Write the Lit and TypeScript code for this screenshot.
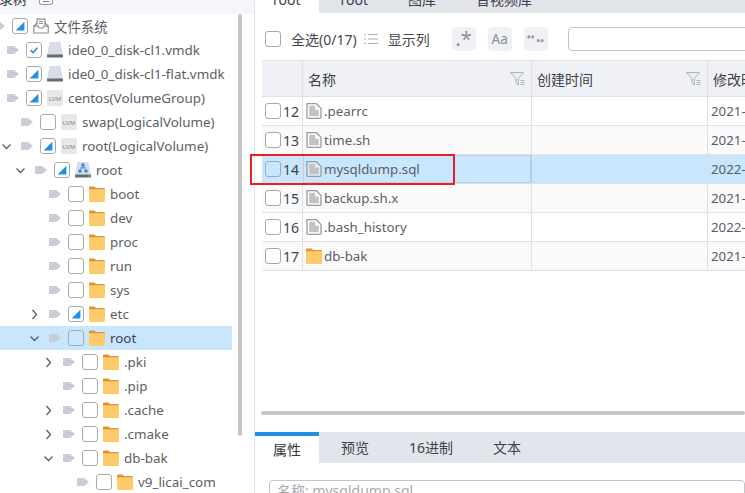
import { LitElement, html, css, svg } from 'lit';
import { customElement } from 'lit/decorators.js';

type Kind = 'fs' | 'disk' | 'lvm' | 'vol' | 'dir';
type Check = 'none' | 'part' | 'full';
interface TreeRow {
  name: string;
  depth: number;
  kind: Kind;
  check: Check;
  chevron?: 'open' | 'closed';
  selected?: boolean;
}

const TREE: TreeRow[] = [
  { name: '文件系统', depth: 0, kind: 'fs', check: 'part' },
  { name: 'ide0_0_disk-cl1.vmdk', depth: 1, kind: 'disk', check: 'full' },
  { name: 'ide0_0_disk-cl1-flat.vmdk', depth: 1, kind: 'disk', check: 'part' },
  { name: 'centos(VolumeGroup)', depth: 1, kind: 'lvm', check: 'part' },
  { name: 'swap(LogicalVolume)', depth: 2, kind: 'lvm', check: 'none' },
  { name: 'root(LogicalVolume)', depth: 2, kind: 'lvm', check: 'part', chevron: 'open' },
  { name: 'root', depth: 3, kind: 'vol', check: 'part', chevron: 'open' },
  { name: 'boot', depth: 4, kind: 'dir', check: 'none' },
  { name: 'dev', depth: 4, kind: 'dir', check: 'none' },
  { name: 'proc', depth: 4, kind: 'dir', check: 'none' },
  { name: 'run', depth: 4, kind: 'dir', check: 'none' },
  { name: 'sys', depth: 4, kind: 'dir', check: 'none' },
  { name: 'etc', depth: 4, kind: 'dir', check: 'part', chevron: 'closed' },
  { name: 'root', depth: 4, kind: 'dir', check: 'none', chevron: 'open', selected: true },
  { name: '.pki', depth: 5, kind: 'dir', check: 'none', chevron: 'closed' },
  { name: '.pip', depth: 5, kind: 'dir', check: 'none' },
  { name: '.cache', depth: 5, kind: 'dir', check: 'none', chevron: 'closed' },
  { name: '.cmake', depth: 5, kind: 'dir', check: 'none', chevron: 'closed' },
  { name: 'db-bak', depth: 5, kind: 'dir', check: 'none', chevron: 'open' },
  { name: 'v9_licai_com', depth: 6, kind: 'dir', check: 'none' },
];

const FILES = [
  { no: 12, name: '.pearrc', date: '2021-', dir: false },
  { no: 13, name: 'time.sh', date: '2021-', dir: false },
  { no: 14, name: 'mysqldump.sql', date: '2022-', dir: false, selected: true },
  { no: 15, name: 'backup.sh.x', date: '2021-', dir: false },
  { no: 16, name: '.bash_history', date: '2022-', dir: false },
  { no: 17, name: 'db-bak', date: '2021-', dir: true },
];

const folderIcon = svg`<svg class="icon" viewBox="0 0 16 16"><path d="M0 1.5q0-1 1-1h4.5l1.5 1.5h8q1 0 1 1V4H0z" fill="#e0933a"/><path d="M0 3.2h16V15q0 1-1 1H1q-1 0-1-1z" fill="#fdcb69"/></svg>`;
const fileIcon = svg`<svg class="icon" viewBox="0 0 16 16"><path d="M1 .7h9.3l4.7 4.7v9.1q0 .8-.8.8H1.8q-.8 0-.8-.8z" fill="#fff" fill-opacity=".35" stroke="#9a9a9a" stroke-width="1.3"/><path d="M3.2 2.8h6v4h3.6v6.4H3.2z" fill="#c2c2c2"/></svg>`;
const diskIcon = svg`<svg class="icon" viewBox="0 0 16 16"><path d="M2.6 0h10.8L16 13H0z" fill="#d8dde8"/><rect y="12.6" width="16" height="3" rx=".6" fill="#666c70"/></svg>`;
const lvmIcon = svg`<svg class="icon" viewBox="0 0 16 16"><rect width="16" height="16" rx="1.5" fill="#e9e8e6"/><text x="8" y="10.6" class="lvm">LVM</text></svg>`;
const volIcon = svg`<svg class="icon" viewBox="0 0 16 16"><path d="M2.6 0h10.8L16 13H0z" fill="#d8dde8"/><rect y="12.6" width="16" height="3" rx=".6" fill="#666c70"/><g fill="#2b83e0"><rect x="6.5" y="1.5" width="3" height="3"/><rect x="3.5" y="7.5" width="3" height="3"/><rect x="9.5" y="7.5" width="3" height="3"/><rect x="7.5" y="4" width="1" height="2"/><rect x="5" y="5.5" width="6" height="1"/></g><rect x="13" y="13.4" width="2" height="1.4" fill="#5fc26b"/></svg>`;
const fsIcon = svg`<svg class="icon" viewBox="0 0 16 16" fill="none" stroke="#8b8f96" stroke-width="1.2"><path d="M4 7V1.2h8V7"/><path d="M6 3.5h4M6 5.5h4"/><path d="M4.2 5 .8 8v7h14.4V8l-3.4-3"/><path d="M.8 8.2h4.4l1 1.8h3.6l1-1.8h4.4"/></svg>`;

const ICONS: Record<Kind, unknown> = { fs: fsIcon, disk: diskIcon, lvm: lvmIcon, vol: volIcon, dir: folderIcon };

function checkbox(state: Check) {
  return html`<span class="check">
    ${state === 'part' ? svg`<svg viewBox="0 0 16 16"><path d="M3 13 13 3v10z" fill="#1e90e6"/></svg>` : ''}
    ${state === 'full' ? svg`<svg viewBox="0 0 16 16"><path d="M4 8.2 7 11l5-5.6" fill="none" stroke="#1e90e6" stroke-width="1.8"/></svg>` : ''}
  </span>`;
}

function chevron(kind?: 'open' | 'closed') {
  if (!kind) return html`<span class="chev"></span>`;
  const d = kind === 'open' ? 'M1.5 3.5 5.5 7.5 9.5 3.5' : 'M3.5 1 7.5 5.5 3.5 10';
  return html`<span class="chev"><svg viewBox="0 0 11 11"><path d=${d} fill="none" stroke="#5b5f66" stroke-width="1.3"/></svg></span>`;
}

const tri = svg`<svg class="tri" viewBox="0 0 12 8"><path d="M0 0h7l5 4-5 4H0z" fill="#c8cdda"/></svg>`;
const filterIcon = svg`<svg class="filter" viewBox="0 0 15 14" fill="none" stroke="#a9aeb8"><path d="M.6.6h13L8.4 6.5v6.6L6 11V6.5z"/><path d="M10.5 8.5h4M10.5 10.5h4M10.5 12.5h4" stroke-width=".9"/></svg>`;
const quoteIcon = svg`<svg class="quote" viewBox="0 0 17 14" fill="#9a9da4"><circle cx="1.8" cy="5" r="1.5"/><circle cx="5.6" cy="5" r="1.5"/><path d="M.4 5 2.4 3h.7L2 5zM4.2 5 6.2 3h.7L5.8 5z"/><circle cx="11.4" cy="8.4" r="1.5"/><circle cx="15.2" cy="8.4" r="1.5"/><path d="M12.9 8.4l-2 2h-.7l1.2-2zM16.7 8.4l-2 2h-.7l1.2-2z"/></svg>`;

@customElement('app-root')
export class AppRoot extends LitElement {
  static styles = css`
    :host {
      display: flex;
      width: 745px;
      height: 493px;
      overflow: hidden;
      background: #fff;
      color: #5b5e66;
      font: 14px 'Noto Sans', 'Noto Sans CJK SC', sans-serif;
    }
    svg { display: block; }
    .left {
      width: 254px;
      flex: none;
      border-right: 1px solid #e3e5ec;
      display: flex;
      flex-direction: column;
      overflow: hidden;
    }
    .left-head {
      height: 14px;
      flex: none;
      background: #f5f6f9;
      display: flex;
      align-items: flex-end;
      gap: 12px;
      padding-bottom: 9px;
      box-sizing: border-box;
      overflow: hidden;
      color: #33363c;
    }
    .left-head .name { margin: 0 0 -3px -15px; white-space: nowrap; line-height: 18px; }
    .left-head .collapse {
      width: 14px;
      height: 14px;
      border: 1px solid #9a9da4;
      border-radius: 2px;
      flex: none;
      box-sizing: border-box;
      display: flex;
      align-items: flex-end;
      justify-content: center;
      padding-bottom: 2px;
    }
    .left-head .collapse i { width: 6px; height: 1px; background: #7f828a; display: block; }
    .tree-wrap { flex: 1; display: flex; min-height: 0; gap: 6px; font-size: 13.4px; }
    .tree { width: 232px; flex: none; }
    .row { height: 24px; overflow: hidden; }
    .row.sel { background: #c9e6ff; }
    .row-in {
      display: flex;
      align-items: center;
      height: 24px;
      white-space: nowrap;
    }
    .row.sel .row-in { color: #3f434a; }
    .chev { width: 11px; height: 11px; flex: none; margin-right: 9px; }
    .tri { width: 12px; height: 8px; flex: none; margin-right: 7px; }
    .check {
      width: 16px;
      height: 16px;
      flex: none;
      box-sizing: border-box;
      border: 1px solid #a8a8a8;
      border-radius: 3px;
      background: #fff;
      display: block;
    }
    .check svg { width: 14px; height: 14px; }
    .sel .check { background: transparent; }
    .icon { width: 16px; height: 16px; flex: none; }
    .lvm { font: 6.2px 'Liberation Sans', sans-serif; fill: #7e8084; text-anchor: middle; }
    .row-in .icon { margin: 0 5px; }
    .vbar { width: 3.5px; height: 422px; border-radius: 2px; background: #c6c6c6; flex: none; }

    .right { flex: 1; min-width: 0; display: flex; flex-direction: column; }
    .tabs {
      display: flex;
      flex: none;
      gap: 4px;
      background: #e2e5ec;
      color: #3e4148;
      overflow: hidden;
    }
    .tab { flex: none; padding: 0 18px; white-space: nowrap; }
    .top-tabs { height: 13px; align-items: flex-start; }
    .top-tabs .tab { line-height: 18px; margin-top: -9px; height: 22px; }
    .top-tabs .tab.on { background: #fff; }
    .tool {
      height: 47px;
      flex: none;
      display: flex;
      align-items: center;
      padding: 5px 0 0 10px;
      box-sizing: border-box;
      white-space: nowrap;
      color: #44474e;
    }
    .tool .all { margin-left: 10px; }
    .list-ic { width: 14px; height: 12px; margin: 0 10px 0 7px; flex: none; }
    .pill {
      width: 24px;
      height: 24px;
      border-radius: 4px;
      background: #f0f1f6;
      flex: none;
      color: #8a8d94;
      display: flex;
      align-items: center;
      justify-content: center;
      margin-right: 12px;
    }
    .pill.first { margin-left: 22px; font-size: 20px; line-height: 1; }
    .pill.aa { font-size: 13.5px; }
    .quote { width: 17px; height: 14px; }
    .search {
      flex: none;
      width: 200px;
      height: 24px;
      margin-left: 8px;
      border: 1px solid #c4c6cc;
      border-radius: 4px;
      box-sizing: border-box;
    }
    .table { flex: none; margin-left: 7px; width: 500px; }
    .tr {
      display: grid;
      grid-template-columns: 41px 229px 176px 1fr;
      height: 29px;
      border-bottom: 1px solid #dfe1ea;
      box-sizing: border-box;
      align-items: stretch;
      background: #fff;
      font-size: 13.3px;
    }
    .tr.odd { background: #fafafa; }
    .tr.sel { background: #c9e6ff; }
    .tr.head {
      height: 37px;
      background: #f0f1f6;
      border-top: 1px solid #dfe1ea;
      color: #3c3f46;
      font-size: 14px;
    }
    .td {
      display: flex;
      align-items: center;
      border-right: 1px solid #dfe1ea;
      padding-left: 3px;
      white-space: nowrap;
      overflow: hidden;
      min-width: 0;
    }
    .td.last { border-right: 0; }
    .td.focus { box-shadow: inset 0 0 0 1px #b9cfe2; border-right-color: #b9cfe2; }
    .head .td { justify-content: space-between; padding: 0 6px 0 5px; }
    .num .n { margin-left: 2px; color: #3f4249; font-size: 14px; }
    .tr .icon { margin-right: 2px; }
    .filter { width: 15px; height: 14px; flex: none; }

    .spacer { flex: none; height: 161px; display: flex; align-items: flex-end; padding-left: 6px; }
    .hbar { width: 100%; height: 4px; border-radius: 2px; background: #c6c6c6; margin-bottom: 17px; }
    .bottom-tabs { height: 31px; }
    .bottom-tabs .tab { line-height: 31px; }
    .bottom-tabs .tab.on {
      background: #fff;
      border-top: 4px solid #1e90e6;
      box-sizing: border-box;
      line-height: 28px;
      color: #33363c;
    }
    .prop {
      margin: 17px 0 0 14px;
      height: 40px;
      flex: none;
      border: 1px solid #c4c6cc;
      border-radius: 4px;
      padding: 1px 0 0 7px;
      color: #a7a9af;
      white-space: nowrap;
      line-height: 18px;
    }
    .mark {
      position: absolute;
      left: 250px;
      top: 154px;
      width: 205px;
      height: 31px;
      box-sizing: border-box;
      border: 2px solid #ee1c25;
    }
  `;

  renderRow(r: TreeRow) {
    const start = r.depth * 14 - 7 - 20;
    return html`<div class="row ${r.selected ? 'sel' : ''}">
      <div class="row-in" style="margin-left:${start}px">
        ${chevron(r.chevron)}${tri}${checkbox(r.check)}${ICONS[r.kind]}<span>${r.name}</span>
      </div>
    </div>`;
  }

  render() {
    return html`
      <div class="left">
        <div class="left-head"><span class="name">目录树</span><span class="collapse"><i></i></span></div>
        <div class="tree-wrap">
          <div class="tree">${TREE.map((r) => this.renderRow(r))}</div>
          <div class="vbar"></div>
        </div>
      </div>
      <div class="right">
        <div class="tabs top-tabs">
          <div class="tab on">root</div>
          <div class="tab">root</div>
          <div class="tab">图库</div>
          <div class="tab">音视频库</div>
        </div>
        <div class="tool">
          ${checkbox('none')}
          <span class="all">全选(0/17)</span>
          <svg class="list-ic" viewBox="0 0 14 12" stroke="#a9adb5" fill="none"><path d="M0 1.5h2M0 6h2M0 10.5h2M4 1.5h10M4 6h10M4 10.5h10"/></svg>
          <span>显示列</span>
          <span class="pill first">.*</span>
          <span class="pill aa">Aa</span>
          <span class="pill">${quoteIcon}</span>
          <span class="search"></span>
        </div>
        <div class="table">
          <div class="tr head">
            <div class="td"></div>
            <div class="td"><span>名称</span>${filterIcon}</div>
            <div class="td"><span>创建时间</span>${filterIcon}</div>
            <div class="td last">修改时间</div>
          </div>
          ${FILES.map(
            (f, i) => html`<div class="tr ${i % 2 ? 'odd' : ''} ${f.selected ? 'sel' : ''}">
              <div class="td num">${checkbox('none')}<span class="n">${f.no}</span></div>
              <div class="td ${f.selected ? 'focus' : ''}">${f.dir ? folderIcon : fileIcon}${f.name}</div>
              <div class="td"></div>
              <div class="td last">${f.date}</div>
            </div>`,
          )}
        </div>
        <div class="spacer"><div class="hbar"></div></div>
        <div class="tabs bottom-tabs">
          <div class="tab on">属性</div>
          <div class="tab">预览</div>
          <div class="tab">16进制</div>
          <div class="tab">文本</div>
        </div>
        <div class="prop">名称: mysqldump.sql</div>
      </div>
      <div class="mark"></div>
    `;
  }
}
